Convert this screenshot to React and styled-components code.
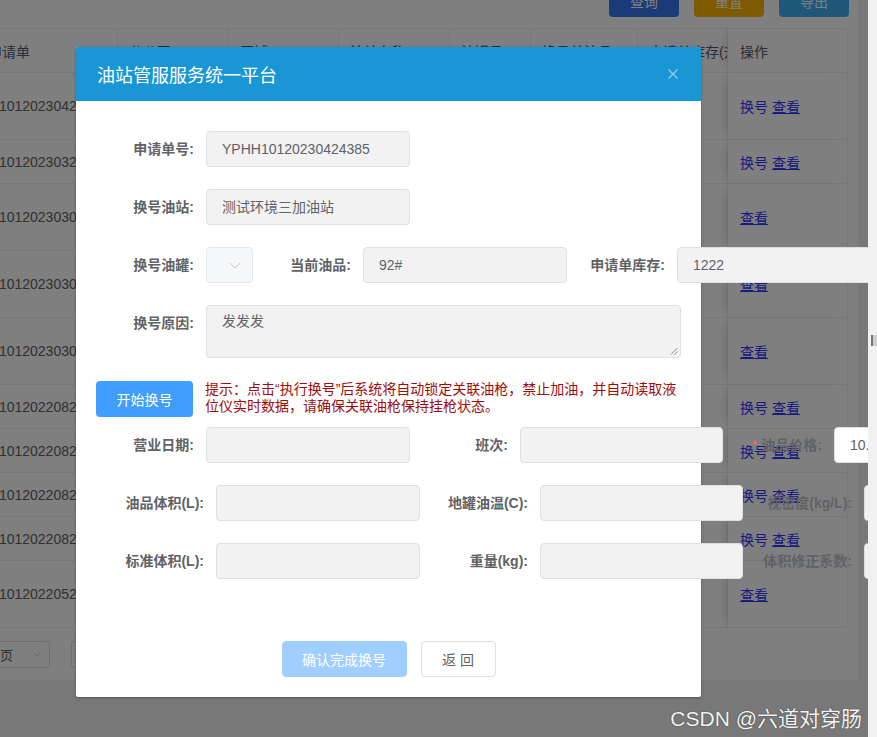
import React from 'react';
import styled, { createGlobalStyle } from 'styled-components';

const GlobalStyle = createGlobalStyle`
  html, body { margin: 0; padding: 0; }
  body {
    font-family: "Liberation Sans", "Noto Sans CJK SC", sans-serif;
    font-size: 14px;
    color: #606266;
  }
  * { box-sizing: border-box; }
`;

// page underneath the dialog
const Screen = styled.div`
  position: relative;
  display: flex;
  width: 877px;
  height: 737px;
  overflow: hidden;
`;

const Viewport = styled.div`
  position: relative;
  width: 868px;
  height: 737px;
  overflow: hidden;
  background: #f0f0f0;
`;

const Card = styled.div`
  width: 858px;
  height: 680px;
  padding-right: 10px;
  background: #fff;
  display: flex;
  flex-direction: column;
`;

const Toolbar = styled.div`
  display: flex;
  justify-content: flex-end;
  gap: 15px;
  height: 32px;
  margin-top: -15px;
  margin-bottom: 11px;
  margin-right: -1px;
`;

const TopButton = styled.button`
  width: 70px;
  height: 32px;
  border: none;
  border-radius: 4px;
  background: ${(p) => p.$bg};
  color: #fff;
  font-family: inherit;
  font-size: 14px;
`;

const TableWrap = styled.div`
  width: 848px;
  overflow: hidden;
`;

const Table = styled.div`
  width: 899px;
  margin-left: -51px;
`;

const cols = '169px 111px 110px 111px 81px 107px 90px 120px';

const Row = styled.div`
  display: grid;
  grid-template-columns: ${cols};
  height: ${(p) => p.$h}px;
  border-bottom: 1px solid #ebeef5;
  border-top: ${(p) => (p.$head ? '1px solid #ebeef5' : 'none')};
`;

const Cell = styled.div`
  display: flex;
  align-items: center;
  padding: 0 11px;
  border-right: 1px solid #ebeef5;
  overflow: hidden;
  white-space: nowrap;
  font-size: 14px;
  color: ${(p) => (p.$head ? '#515a6e' : '#606266')};
`;

const OpsCell = styled(Cell)`
  padding-left: 12px;
  gap: 4px;
  box-shadow: -8px 0 10px -6px rgba(0, 0, 0, 0.14);
`;

const OpLink = styled.a`
  color: #3333ff;
  text-decoration: ${(p) => (p.$underline ? 'underline' : 'none')};
`;

const Pager = styled.div`
  flex: 1;
  display: flex;
  align-items: center;
  overflow: hidden;
`;

const SizeSelect = styled.div`
  display: flex;
  align-items: center;
  justify-content: space-between;
  width: 90px;
  height: 27px;
  margin-left: -40px;
  padding: 0 8px;
  border: 1px solid #dcdfe6;
  border-radius: 3px;
  font-size: 13px;
  color: #606266;
`;

const JumpBox = styled.div`
  width: 50px;
  height: 27px;
  margin-left: 21px;
  border: 1px solid #dcdfe6;
  border-radius: 3px;
`;

const Overlay = styled.div`
  position: absolute;
  inset: 0;
  background: rgba(0, 0, 0, 0.5);
  z-index: 10;
`;

// dialog
const Modal = styled.div`
  position: absolute;
  left: 76px;
  top: 47px;
  width: 625px;
  height: 650px;
  z-index: 11;
  background: #fff;
  border-radius: 2px;
  box-shadow: 0 1px 3px rgba(0, 0, 0, 0.3);
  display: flex;
  flex-direction: column;
`;

const ModalHeader = styled.div`
  height: 54px;
  flex: none;
  display: flex;
  align-items: center;
  justify-content: space-between;
  padding: 0 23px 0 21px;
  background: #1a96d4;
  border-radius: 2px 2px 0 0;
`;

const Title = styled.span`
  font-size: 18px;
  color: #fff;
`;

const ModalBody = styled.div`
  padding: 30px 10px 0;
`;

const FormRow = styled.div`
  display: flex;
  align-items: ${(p) => (p.$top ? 'flex-start' : 'center')};
  margin-bottom: ${(p) => p.$mb ?? 22}px;
  white-space: nowrap;
`;

const Label = styled.label`
  flex: none;
  width: ${(p) => p.$w}px;
  padding-right: 12px;
  text-align: right;
  font-weight: 700;
  font-size: 14px;
  line-height: 36px;
  color: #606266;
`;

const Star = styled.span`
  color: #f56c6c;
  margin-right: 4px;
  font-weight: 400;
`;

const Input = styled.div`
  flex: none;
  width: ${(p) => p.$w}px;
  height: 36px;
  line-height: 34px;
  padding: 0 15px;
  border: 1px solid #dcdfe6;
  border-radius: 4px;
  background: ${(p) => (p.$editable ? '#fff' : '#f2f2f3')};
  color: #606266;
  font-size: 14px;
  overflow: hidden;
`;

const Select = styled.div`
  flex: none;
  width: 47px;
  height: 36px;
  display: flex;
  align-items: center;
  justify-content: flex-end;
  padding-right: 11px;
  border: 1px solid #e4e7ed;
  border-radius: 4px;
  background: #f5f7fa;
`;

const TextArea = styled.div`
  position: relative;
  flex: none;
  width: 475px;
  height: 53px;
  padding: 5px 15px;
  line-height: 20px;
  border: 1px solid #dcdfe6;
  border-radius: 4px;
  background: #f2f2f3;
  color: #606266;
`;

const Grip = styled.svg`
  position: absolute;
  right: 2px;
  bottom: 2px;
`;

const StartButton = styled.button`
  flex: none;
  width: 97px;
  height: 36px;
  margin-left: 10px;
  border: none;
  border-radius: 4px;
  background: #409eff;
  color: #fff;
  font-family: inherit;
  font-size: 14px;
`;

const Hint = styled.div`
  margin-left: 12px;
  font-size: 14px;
  line-height: 17px;
  color: #9e0b0b;
  white-space: nowrap;
`;

const Footer = styled.div`
  margin-top: auto;
  display: flex;
  justify-content: center;
  gap: 14px;
  padding-bottom: 20px;
`;

const FooterButton = styled.button`
  width: ${(p) => p.$w}px;
  height: 36px;
  border-radius: 4px;
  border: 1px solid ${(p) => (p.$primary ? '#a0cfff' : '#dcdfe6')};
  background: ${(p) => (p.$primary ? '#a0cfff' : '#fff')};
  color: ${(p) => (p.$primary ? '#fff' : '#606266')};
  font-family: inherit;
  font-size: 14px;
`;

const ScrollTrack = styled.div`
  width: 9px;
  height: 737px;
  background: #f1f1f1;
  display: flex;
  flex-direction: column;
  align-items: flex-end;
  padding-top: 335px;
`;

const ScrollMark = styled.div`
  width: 6px;
  height: 11px;
  background: #cfcfcf;
  border-left: 2px solid #777;
`;

const Watermark = styled.div`
  position: absolute;
  right: 15px;
  bottom: 6px;
  z-index: 50;
  font-size: 21px;
  line-height: 24px;
  color: #f4f4f4;
  text-shadow: 0 0 1px #444, 0 0 1px #444;
`;

const Chevron = ({ w = 12, color = '#c0c4cc' }) => (
  <svg width={w} height={w / 2 + 1} viewBox="0 0 12 7">
    <polyline points="1,1 6,6 11,1" fill="none" stroke={color} strokeWidth="1" />
  </svg>
);

const rows = [
  { id: 'YPHH10120230424385', h: 67, ops: ['换号', '查看'] },
  { id: 'YPHH10120230324102', h: 44, ops: ['换号', '查看'] },
  { id: 'YPHH10120230308517', h: 67, ops: ['查看'] },
  { id: 'YPHH10120230306223', h: 67, ops: ['查看'] },
  { id: 'YPHH10120230302941', h: 67, ops: ['查看'] },
  { id: 'YPHH10120220829376', h: 44, ops: ['换号', '查看'] },
  { id: 'YPHH10120220826150', h: 44, ops: ['换号', '查看'] },
  { id: 'YPHH10120220823718', h: 44, ops: ['换号', '查看'] },
  { id: 'YPHH10120220822604', h: 44, ops: ['换号', '查看'] },
  { id: 'YPHH10120220527833', h: 67, ops: ['查看'] },
];

const heads = ['换号申请单', '分公司', '区域', '油站名称', '油罐号', '换号前油品', '申请单库存(升)'];

const App = () => {
  return (
    <>
      <GlobalStyle />
      <Screen>
        <Viewport>
          <Card>
            <Toolbar>
              <TopButton $bg="#3475f0">查询</TopButton>
              <TopButton $bg="#ffb400">重置</TopButton>
              <TopButton $bg="#40b0f8">导出</TopButton>
            </Toolbar>
            <TableWrap>
              <Table>
                <Row $h={45} $head>
                  {heads.map((h) => (
                    <Cell key={h} $head>{h}</Cell>
                  ))}
                  <OpsCell $head>操作</OpsCell>
                </Row>
                {rows.map((r) => (
                  <Row key={r.id} $h={r.h}>
                    <Cell>{r.id}</Cell>
                    <Cell>测试分公司</Cell>
                    <Cell>测试区域</Cell>
                    <Cell>测试环境三加油站</Cell>
                    <Cell>1</Cell>
                    <Cell>92#</Cell>
                    <Cell>1222</Cell>
                    <OpsCell>
                      {r.ops.map((o) => (
                        <OpLink key={o} $underline={o === '查看'}>{o}</OpLink>
                      ))}
                    </OpsCell>
                  </Row>
                ))}
              </Table>
            </TableWrap>
            <Pager>
              <SizeSelect>
                <span>10条/页</span>
                <Chevron w={8} />
              </SizeSelect>
              <JumpBox />
            </Pager>
          </Card>

          <Overlay />

          <Modal>
            <ModalHeader>
              <Title>油站管服服务统一平台</Title>
              <svg width="10" height="10" viewBox="0 0 10 10">
                <path d="M0.5 0.5 L9.5 9.5 M9.5 0.5 L0.5 9.5" stroke="#9fcfec" strokeWidth="1.1" />
              </svg>
            </ModalHeader>
            <ModalBody>
              <FormRow>
                <Label $w={120}>申请单号:</Label>
                <Input $w={204}>YPHH10120230424385</Input>
              </FormRow>
              <FormRow>
                <Label $w={120}>换号油站:</Label>
                <Input $w={204}>测试环境三加油站</Input>
              </FormRow>
              <FormRow>
                <Label $w={120}>换号油罐:</Label>
                <Select>
                  <Chevron />
                </Select>
                <Label $w={110}>当前油品:</Label>
                <Input $w={204}>92#</Input>
                <Label $w={110}>申请单库存:</Label>
                <Input $w={204}>1222</Input>
              </FormRow>
              <FormRow $top $mb={23}>
                <Label $w={120}>换号原因:</Label>
                <TextArea>
                  发发发
                  <Grip width="8" height="8" viewBox="0 0 8 8">
                    <path d="M7.5 1 L1 7.5 M7.5 4.5 L4.5 7.5" stroke="#888" strokeWidth="1" />
                  </Grip>
                </TextArea>
              </FormRow>
              <FormRow $top $mb={10}>
                <StartButton>开始换号</StartButton>
                <Hint>
                  提示：点击“执行换号”后系统将自动锁定关联油枪，禁止加油，并自动读取液
                  <br />
                  位仪实时数据，请确保关联油枪保持挂枪状态。
                </Hint>
              </FormRow>
              <FormRow>
                <Label $w={120}>营业日期:</Label>
                <Input $w={204} />
                <Label $w={110}>班次:</Label>
                <Input $w={203} />
                <Label $w={111}>
                  <Star>*</Star>油品价格:
                </Label>
                <Input $w={204} $editable>10.12</Input>
              </FormRow>
              <FormRow>
                <Label $w={130}>油品体积(L):</Label>
                <Input $w={204} />
                <Label $w={120}>地罐油温(C):</Label>
                <Input $w={203} />
                <Label $w={121}>视密度(kg/L):</Label>
                <Input $w={204} />
              </FormRow>
              <FormRow>
                <Label $w={130}>标准体积(L):</Label>
                <Input $w={204} />
                <Label $w={120}>重量(kg):</Label>
                <Input $w={203} />
                <Label $w={121}>体积修正系数:</Label>
                <Input $w={204} />
              </FormRow>
            </ModalBody>
            <Footer>
              <FooterButton $w={125} $primary>确认完成换号</FooterButton>
              <FooterButton $w={75}>返 回</FooterButton>
            </Footer>
          </Modal>
        </Viewport>
        <ScrollTrack>
          <ScrollMark />
        </ScrollTrack>
        <Watermark>CSDN @六道对穿肠</Watermark>
      </Screen>
    </>
  );
};

export default App;
